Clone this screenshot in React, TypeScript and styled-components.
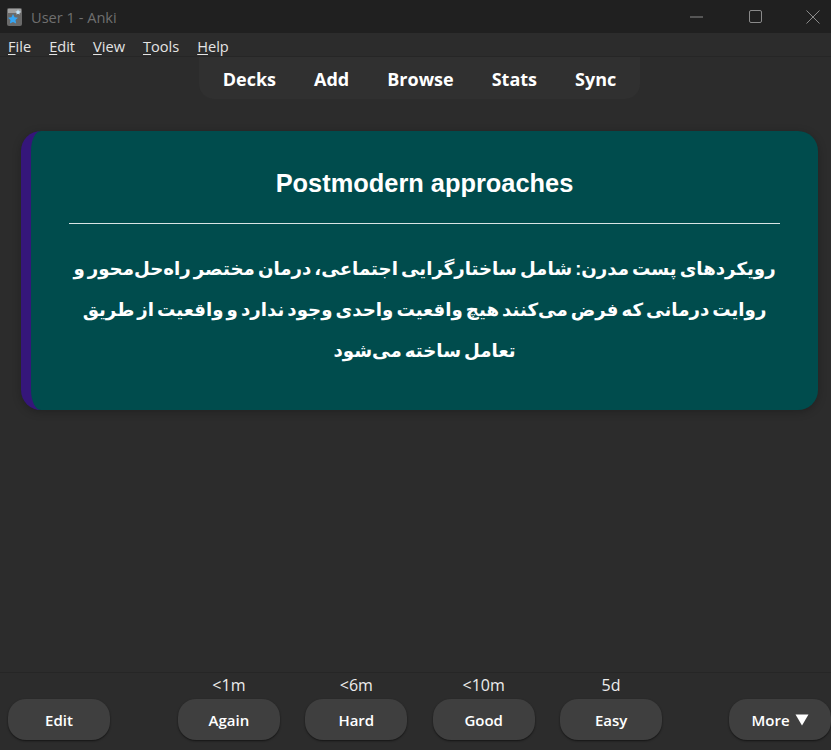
import React from "react";
import styled, { createGlobalStyle } from "styled-components";

const GlobalStyle = createGlobalStyle`
  html, body {
    margin: 0;
    padding: 0;
    height: 100%;
    background: #2c2c2c;
    overflow: hidden;
  }
  #root {
    height: 100%;
  }
`;

const uiFont = `"Open Sans", "Noto Sans", sans-serif`;
const cardFont = `"Liberation Sans", "DejaVu Sans", sans-serif`;

const Window = styled.div`
  display: flex;
  flex-direction: column;
  height: 750px;
  font-family: ${uiFont};
  color: #fff;
`;

const TitleBar = styled.div`
  display: flex;
  align-items: center;
  height: 33px;
  padding-left: 7px;
  background: #202020;
`;

const AppIcon = styled.svg`
  width: 15px;
  height: 20px;
  margin-right: 9px;
`;

const WindowTitle = styled.div`
  flex: 1;
  font-size: 14.6px;
  color: #6f6f6f;
`;

const WindowButton = styled.div`
  display: flex;
  flex: none;
  align-items: center;
  justify-content: center;
  width: 58px;
  height: 33px;

  &:last-child {
    margin-right: -11px;
  }
`;

const MenuBar = styled.div`
  display: flex;
  align-items: center;
  gap: 18px;
  height: 24px;
  padding: 3px 0 0 8px;
  box-sizing: border-box;
  background: #2c2c2c;
  border-bottom: 1px solid #262626;
  font-size: 14.6px;
  color: #e4e4e4;

  u {
    text-underline-offset: 2px;
  }
`;

const TopNav = styled.nav`
  display: flex;
  align-self: center;
  gap: 38px;
  height: 42px;
  padding: 2px 24px 0 24px;
  box-sizing: border-box;
  margin-left: 8px;
  align-items: center;
  border-radius: 0 0 15px 15px;
  background: #303030;
  font-size: 18px;
  font-weight: 700;
`;

const Reviewer = styled.main`
  flex: 1;
  padding: 32px 13px 0 21px;
`;

const Card = styled.section`
  box-sizing: border-box;
  height: 279px;
  padding: 34px 38px 0 38px;
  border-left: 10px solid #35167a;
  border-radius: 20px;
  background: #004c4d;
  box-shadow: 0 2px 8px rgba(0, 0, 0, 0.25);
  font-family: ${cardFont};
  font-weight: 700;
  text-align: center;
`;

const Question = styled.h1`
  margin: 0;
  font-size: 25.4px;
  line-height: 36px;
`;

const Divider = styled.hr`
  height: 1px;
  margin: 22px 0 25px;
  border: 0;
  background: #d8e4e4;
`;

const Answer = styled.p`
  margin: 0;
  font-size: 18.2px;
  line-height: 41px;
  word-spacing: -2px;
  direction: rtl;
`;

const BottomBar = styled.footer`
  display: flex;
  align-items: flex-end;
  justify-content: space-between;
  height: 78px;
  padding: 0 0 10px 8px;
  box-sizing: border-box;
  border-top: 1px solid #262626;
`;

const AnswerRow = styled.div`
  display: flex;
  gap: 25.4px;
  margin-left: 1px;
`;

const AnswerColumn = styled.div`
  display: flex;
  flex-direction: column;
  align-items: center;
`;

const Interval = styled.div`
  height: 20px;
  margin-bottom: 4px;
  font-size: 16px;
  line-height: 20px;
  color: #ececec;
`;

const Button = styled.button`
  display: flex;
  align-items: center;
  justify-content: center;
  gap: 5px;
  width: 102px;
  height: 41px;
  padding: 0;
  border: 0;
  border-radius: 18px;
  background: #3f3f3f;
  box-shadow: 0 1px 2px rgba(0, 0, 0, 0.55);
  color: #fff;
  font-family: ${uiFont};
  font-size: 15px;
  font-weight: 600;
`;

const answers = [
  { label: "Again", interval: "<1m" },
  { label: "Hard", interval: "<6m" },
  { label: "Good", interval: "<10m" },
  { label: "Easy", interval: "5d" },
];

const menus = [
  ["F", "ile"],
  ["E", "dit"],
  ["V", "iew"],
  ["T", "ools"],
  ["H", "elp"],
];

const navItems = ["Decks", "Add", "Browse", "Stats", "Sync"];

const App: React.FC = () => {
  return (
    <Window>
      <GlobalStyle />
      <TitleBar>
        <AppIcon viewBox="0 0 15 20">
          <rect x="0" y="1" width="15" height="18" rx="2" fill="#6a6a6a" />
          <rect x="1" y="2" width="13" height="4" fill="#a0a0a0" />
          <path d="M6 7l1.6 3.2 3.4.5-2.5 2.4.6 3.4L6 15l-3.1 1.5.6-3.4L1 10.7l3.4-.5z" fill="#35a6f5" />
          <path d="M11 2.5l.9 1.7 1.8.3-1.3 1.3.3 1.8-1.7-.9-1.6.9.3-1.8-1.3-1.3 1.8-.3z" fill="#c2e2f8" />
        </AppIcon>
        <WindowTitle>User 1 - Anki</WindowTitle>
        <WindowButton>
          <svg width="14" height="2" viewBox="0 0 14 2">
            <path d="M0 1h13" stroke="#8a8a8a" strokeWidth="1" />
          </svg>
        </WindowButton>
        <WindowButton>
          <svg width="13" height="13" viewBox="0 0 13 13">
            <rect x="0.5" y="0.5" width="12" height="12" rx="1.5" fill="none" stroke="#8a8a8a" />
          </svg>
        </WindowButton>
        <WindowButton>
          <svg width="14" height="14" viewBox="0 0 14 14">
            <path d="M0.5 0.5l13 13M13.5 0.5l-13 13" stroke="#8a8a8a" />
          </svg>
        </WindowButton>
      </TitleBar>
      <MenuBar>
        {menus.map(([key, rest]) => (
          <span key={key}>
            <u>{key}</u>
            {rest}
          </span>
        ))}
      </MenuBar>
      <TopNav>
        {navItems.map((item) => (
          <span key={item}>{item}</span>
        ))}
      </TopNav>
      <Reviewer>
        <Card>
          <Question>Postmodern approaches</Question>
          <Divider />
          <Answer lang="fa">
            رویکردهای پست مدرن: شامل ساختارگرایی اجتماعی، درمان مختصر راه‌حل‌محور و روایت درمانی که فرض می‌کنند هیچ واقعیت واحدی وجود ندارد و واقعیت از طریق تعامل ساخته می‌شود
          </Answer>
        </Card>
      </Reviewer>
      <BottomBar>
        <Button>Edit</Button>
        <AnswerRow>
          {answers.map((answer) => (
            <AnswerColumn key={answer.label}>
              <Interval>{answer.interval}</Interval>
              <Button>{answer.label}</Button>
            </AnswerColumn>
          ))}
        </AnswerRow>
        <Button>
          More
          <svg width="14" height="12" viewBox="0 0 14 12">
            <path d="M0.5 0.5h13L7 11.5z" fill="#fff" />
          </svg>
        </Button>
      </BottomBar>
    </Window>
  );
};

export default App;
